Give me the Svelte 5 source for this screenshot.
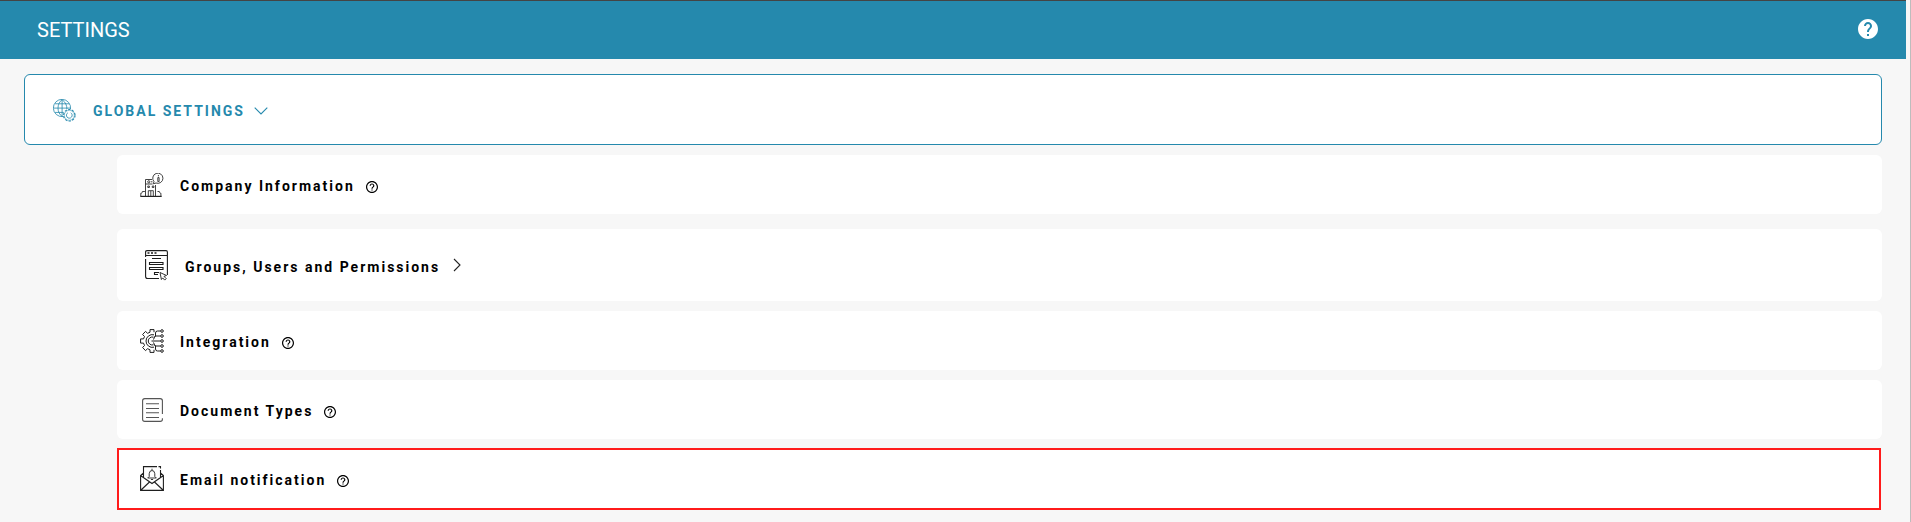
<script>
  const rows = [
    { id: 'company', label: 'Company Information', help: true },
    { id: 'groups', label: 'Groups, Users and Permissions' },
    { id: 'integration', label: 'Integration', help: true },
    { id: 'documents', label: 'Document Types', help: true },
    { id: 'email', label: 'Email notification', help: true, selected: true },
  ];
</script>

<div class="page">
  <header>
    <h1>SETTINGS</h1>
    <svg class="header-help" viewBox="2 2 20 20"><path fill="#fff" d="M12 2C6.48 2 2 6.48 2 12s4.48 10 10 10 10-4.48 10-10S17.52 2 12 2zm1 17h-2v-2h2v2zm2.07-7.75-.9.92C13.45 12.9 13 13.5 13 15h-2v-.5c0-1.1.45-2.1 1.17-2.83l1.24-1.26c.37-.36.59-.86.59-1.41 0-1.1-.9-2-2-2s-2 .9-2 2H8c0-2.21 1.79-4 4-4s4 1.79 4 4c0 .88-.36 1.68-.93 2.25z"/></svg>
  </header>

  <main>
    <section class="global">
      <svg class="globe" viewBox="0 0 24 24" fill="none" stroke="#2589ad" stroke-width=".85">
        <path d="M10.5 18.3A9 9 0 1 1 18.3 10.5M9.5 .7C3.8 5 3.8 14 9.5 18.3M9.5 .7c3.7 2.7 5 6 5 9.8M9.5.7v17.6M.5 9.5h17.8M2.2 5h14.7M2.2 14h9"/>
        <circle cx="17" cy="17" r="6" stroke-width="1.2" stroke-dasharray="2.4 1.37"/>
        <circle cx="17" cy="17" r="5.2" stroke-width=".5"/>
        <path d="M15.5 14.4a3 3 0 1 0 3 0"/>
      </svg>
      <h2>GLOBAL SETTINGS</h2>
      <svg class="down" viewBox="0 0 14 8" fill="none" stroke="#2589ad" stroke-width="1.1"><path d="m.7.7 6.3 6.3L13.3.7"/></svg>
    </section>

    <div class="rows">
      {#each rows as row (row.id)}
        <div class="row {row.id}" class:selected={row.selected}>
          {#if row.id === 'company'}
            <svg class="icon" viewBox="0 0 24 24" fill="none" stroke="#222" stroke-width=".85">
              <path d="M5.5 23V6.5h6.5M15.5 12v11M5.5 11h7" />
              <path d="M.3 23.4h21.4" stroke-width="1.2"/>
              <path d="M.8 23v-2.8c1.3 0 1.5-.5 1.6-1.7h2.5M20.9 23v-2.8c-1.2 0-1.4-.6-1.6-1.7h-1.8M8.3 23v-5.3h5V23M10.8 17.8V23"/>
              <circle cx="8.8" cy="8.8" r="1.1"/><path d="M7.8 13h1.6v1.5H7.8zM12.3 13h1.6v1.5h-1.6zM11 8.8h1.5"/>
              <path d="m14 8.6-.7 2.2 2.7-.8a5.1 5.1 0 1 0-2-1.4Z"/>
              <path d="M17.8 4.6h1.3v4h-1.3zM18.4 2v1.4"/>
            </svg>
          {:else if row.id === 'groups'}
            <svg class="icon" viewBox="0 0 23 31" fill="none" stroke="#1c1c1c" stroke-width="1.1">
              <path d="M.6 7V2Q.6.6 2 .6h19Q22.4.6 22.4 2v23M.5 5.5h22M.6 9v17.500q0 2 2 2H14"/>
              <path d="M2.500 3h2M6 3h2M9.500 3h2" stroke-width="1.700"/>
              <path d="M7 8.500h9M4.500 12.500H18v2H4.500zM4.500 17.500H18v2H4.500zM13 24.500H9.500v-2H14"/>
              <path fill="#fff" stroke-width=".9" d="m15 22.500 6.500 3-2.500.9 2.200 2.200-1.500 1.500-2-2.200-1.300 1.600z"/>
            </svg>
          {:else if row.id === 'integration'}
            <svg class="icon" viewBox="0 0 24 24" fill="none" stroke="#1c1c1c" stroke-width="1">
              <path d="M14 3.200V.6h-4v2.600L7.600 4.300 5.500 2.400 2.600 5.500l1.900 2-1 2.400H.6v4.200h2.900l1 2.400-1.900 2 2.900 3.100 2.100-1.900 2.400 1.100v2.600h4v-2.600"/>
              <path d="M14 5.800a6.400 6.400 0 1 0 0 12.400M13.500 8.200A4 4 0 1 0 13.500 15.800"/>
              <path d="M15.500 7.500V4q0-2 2-2h3M13.500 10.500 15 7h5.500M11.500 12h9M13.500 13.500 15 17h5.500M15.500 16.500V20q0 2 2 2h3"/>
              <circle cx="22" cy="2" r="1.300"/><circle cx="22" cy="7" r="1.300"/><circle cx="22" cy="12" r="1.300"/><circle cx="22" cy="17" r="1.300"/><circle cx="22" cy="22" r="1.300"/>
            </svg>
          {:else if row.id === 'documents'}
            <svg class="icon" viewBox="0 0 24 24" fill="none" stroke="#555" stroke-width="1.1">
              <path d="M22.400 16V2.800Q22.400.6 20.200.6H4.800Q2.600.6 2.600 2.800v18.400q0 2.200 2.200 2.200h15.400q2.200 0 2.200-2.200v-1"/>
              <path d="M6 5.700h13M6 10.500h13M6 14.800h13M6 19.500h13"/>
            </svg>
          {:else}
            <svg class="icon" viewBox="0 0 24 25" fill="none" stroke="#1f1f1f" stroke-width="1.1">
              <path d="M3.500 11.500V.6H17M18.500.6h2v2M20.500 4v7.500M3.500 7 .6 9.500v14.900h22.800V9.500L20.500 7M.5 9.500l11.500 8 11.500-8M.5 24.500l9-8.500M23.500 24.500l-9-8.500"/>
              <path stroke-width=".9" d="M12 2.700v1.300M9.200 10.500V7.700Q9.400 4.500 12 4.500t2.800 3.200v2.800l1.500 1.500H7.700zM10.900 13.500h2.200"/>
            </svg>
          {/if}
          <span class="label">{row.label}</span>
          {#if row.help}
            <svg class="help" viewBox="2 2 20 20"><path d="M11 18h2v-2h-2v2zm1-16C6.480 2 2 6.480 2 12s4.480 10 10 10 10-4.480 10-10S17.520 2 12 2zm0 18c-4.410 0-8-3.590-8-8s3.590-8 8-8 8 3.590 8 8-3.590 8-8 8zm0-14c-2.210 0-4 1.790-4 4h2c0-1.100.9-2 2-2s2 .9 2 2c0 2-3 1.750-3 5h2c0-2.250 3-2.500 3-5 0-2.210-1.790-4-4-4z"/></svg>
          {:else}
            <svg class="right" viewBox="0 0 8 14" fill="none" stroke="#222" stroke-width="1.1"><path d="m1 1 6 6-6 6"/></svg>
          {/if}
        </div>
      {/each}
    </div>
  </main>
</div>

<style>
  :global(body) { margin: 0; background: #f7f7f7; }
  .page {
    box-sizing: border-box;
    height: 522px;
    overflow: hidden;
    padding-right: 4px;
    border-right: 1px solid #bdbdbd;
    background: #f7f7f7;
    font-family: Roboto, sans-serif;
  }
  header {
    box-sizing: border-box;
    height: 59px;
    border-top: 1px solid #444;
    background: #2589ad;
    display: flex;
    align-items: center;
    justify-content: space-between;
    padding: 0 28px 0 37px;
  }
  h1 { margin: 0; color: #fff; font-size: 20px; font-weight: 400; line-height: 24px; }
  .header-help { width: 20px; height: 20px; margin-bottom: 2px; }
  main { padding: 15px 24px 0; }
  .global {
    box-sizing: border-box;
    height: 71px;
    border: 1px solid #2589ad;
    border-radius: 6px;
    background: #fff;
    display: flex;
    align-items: center;
    padding-left: 28px;
  }
  .globe { width: 23px; height: 23px; margin-top: 1px; }
  h2 { margin: 3px 0 0 17px; color: #2589ad; font-size: 14px; line-height: 16px; font-weight: 700; letter-spacing: 2px; }
  .down { width: 14px; height: 8px; margin: 3px 0 0 9px; }
  .rows { padding: 10px 0 0 93px; }
  .row {
    box-sizing: border-box;
    height: 59px;
    margin-bottom: 10px;
    border-radius: 6px;
    background: #fff;
    display: flex;
    align-items: center;
    padding-left: 23px;
  }
  .icon { width: 24px; height: 24px; margin-top: 1px; }
  .label { margin: 3px 0 0 16px; font-size: 14px; line-height: 16px; font-weight: 700; letter-spacing: 2px; color: #000; white-space: nowrap; }
  .help { width: 12px; height: 12px; margin: 4px 0 0 11px; }
  .right { width: 8px; height: 14px; margin: 0 0 0 13px; }
  .company { margin-bottom: 15px; }
  .company .icon { margin-top: 0; }
  .groups { height: 72px; padding-left: 28px; }
  .groups .icon { width: 23px; height: 31px; margin: 0; }
  .groups .label { margin: 4px 0 0 17px; }
  .email .icon { height: 25px; margin: 0 0 1px; }
  .email .label { margin-top: 2px; }
  .selected {
    height: 62px;
    margin: -1px 1px 0 0;
    border: 2px solid #ff1b1b;
    border-radius: 0;
    padding-left: 21px;
  }
</style>
